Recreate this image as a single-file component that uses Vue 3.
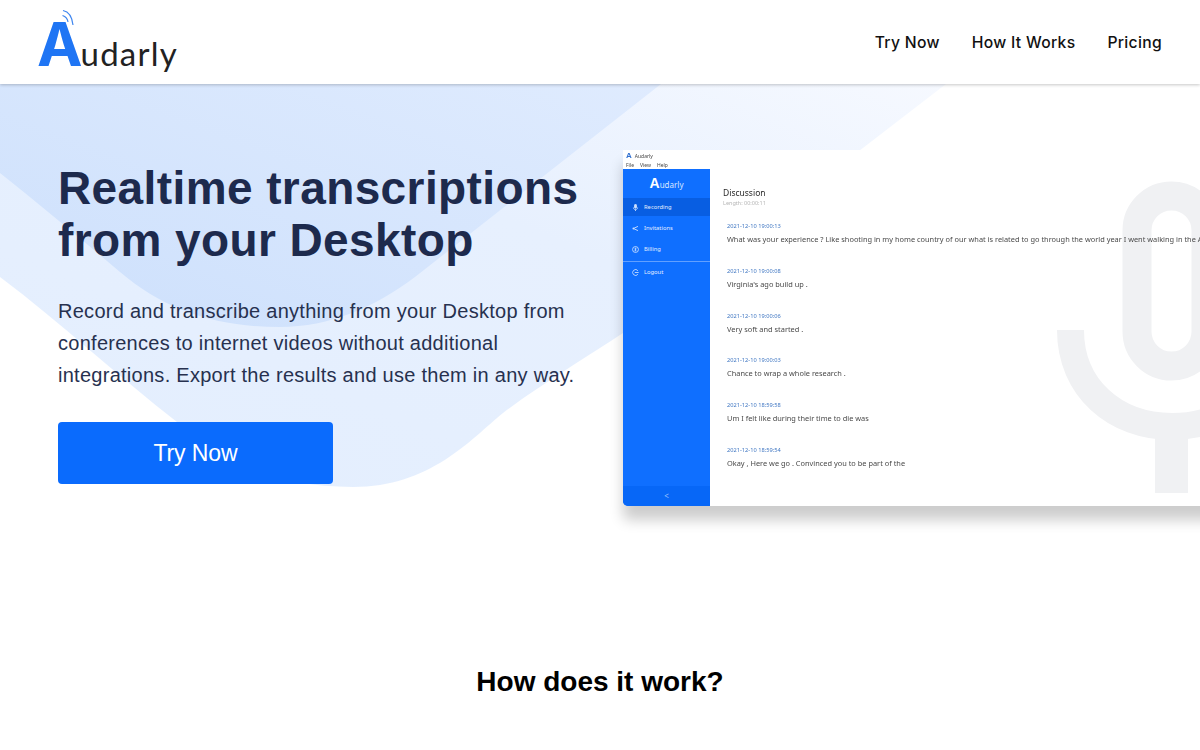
<script setup>
const navLinks = ["Try Now", "How It Works", "Pricing"];

const menu = [
  { label: "Recording", icon: "mic", active: true },
  { label: "Invitations", icon: "share" },
  { label: "Billing", icon: "coin" },
];

const lines = [
  { time: "2021-12-10 19:00:13", text: "What was your experience ? Like shooting in my home country of our what is related to go through the world year I went walking in the A" },
  { time: "2021-12-10 19:00:08", text: "Virginia's ago build up ." },
  { time: "2021-12-10 19:00:06", text: "Very soft and started ." },
  { time: "2021-12-10 19:00:03", text: "Chance to wrap a whole research ." },
  { time: "2021-12-10 18:59:58", text: "Um I felt like during their time to die was" },
  { time: "2021-12-10 18:59:54", text: "Okay , Here we go . Convinced you to be part of the" },
];
</script>

<template>
  <div class="page">
    <header class="header">
      <a class="logo">
        <svg class="logo-waves" viewBox="0 0 14 20" width="14" height="20" fill="none" stroke="#3f86ef">
          <path d="M1.5 6.5C4.5 7.5 6.5 9.5 7 13" stroke-width="1.2" />
          <path d="M2 1.5C7 2.5 11 6.5 12 16" stroke-width="1.2" />
        </svg>
        <span class="logo-a">A</span><span class="logo-rest">udarly</span>
      </a>
      <nav class="nav">
        <a v-for="link in navLinks" :key="link">{{ link }}</a>
      </nav>
    </header>

    <section class="hero">
      <svg class="hero-bg" viewBox="0 84 1200 430" width="1200" height="430">
        <defs>
          <linearGradient id="lightFill" x1="0" y1="1" x2="1" y2="0">
            <stop offset="0" stop-color="#e3eefe" />
            <stop offset="0.6" stop-color="#e7f0fe" />
            <stop offset="1" stop-color="#f6f9ff" />
          </linearGradient>
          <linearGradient id="darkFill" x1="0" y1="1" x2="1" y2="0">
            <stop offset="0" stop-color="#cde0fc" />
            <stop offset="1" stop-color="#dfebfe" />
          </linearGradient>
        </defs>
        <path fill="url(#lightFill)" d="M0 84H946L623 333C590 355 540 385 503 413C470 440 430 487 353 487C270 487 225 460 177 422C120 378 60 322 0 277Z" />
        <path fill="url(#darkFill)" d="M0 84H661L415 277C375 307 330 327 280 327C215 327 165 310 120 272C80 238 40 205 0 173Z" />
      </svg>

      <div class="intro">
        <h1>Realtime transcriptions<br />from your Desktop</h1>
        <p>Record and transcribe anything from your Desktop from conferences to internet videos without additional integrations. Export the results and use them in any way.</p>
        <button class="cta">Try Now</button>
      </div>

      <div class="window">
        <div class="titlebar">
          <div class="title-row"><span class="title-a">A</span>Audarly</div>
          <div class="menu-row"><span>File</span><span>View</span><span>Help</span></div>
        </div>
        <div class="app">
          <aside class="sidebar">
            <div class="side-logo"><span class="side-a">A</span>udarly</div>
            <div v-for="item in menu" :key="item.label" class="side-item" :class="{ active: item.active }">
              <svg viewBox="0 0 10 10" width="7" height="7" fill="none" stroke="#cfe2ff" stroke-width="1.2">
                <template v-if="item.icon === 'mic'">
                  <rect x="3.6" y="0.5" width="2.8" height="5.5" rx="1.4" fill="#cfe2ff" />
                  <path d="M2 5c0 4 6 4 6 0M5 8v2" />
                </template>
                <template v-else-if="item.icon === 'share'">
                  <path d="M8.5 2 2 5l6.5 3" stroke-width="1.3" />
                  <circle cx="2" cy="5" r="1.3" fill="#cfe2ff" stroke="none" />
                </template>
                <template v-else>
                  <circle cx="5" cy="5" r="4.2" />
                  <path d="M6.5 3.4H4.2v1.6h1.6v1.6H3.5M5 2.2v5.6" stroke-width="0.8" />
                </template>
              </svg>
              {{ item.label }}
            </div>
            <div class="side-rule"></div>
            <div class="side-item">
              <svg viewBox="0 0 10 10" width="7" height="7" fill="none" stroke="#cfe2ff" stroke-width="1.2">
                <path d="M8.5 2.5A4.2 4.2 0 1 0 8.5 7.5M4 5h5.5" />
              </svg>
              Logout
            </div>
            <div class="side-toggle">&lt;</div>
          </aside>

          <main class="content">
            <svg class="mic-mark" viewBox="0 0 230 323" width="230" height="323" fill="none" stroke="#f0f1f3">
              <rect x="80" y="16" width="69" height="170" rx="34.5" stroke-width="29" />
              <path d="M13.5 150C13.5 208 58 246.5 115 246.5C172 246.5 216 208 216 150" stroke-width="27" />
              <path d="M114.5 250V313" stroke-width="33" />
            </svg>
            <h2>Discussion</h2>
            <div class="length">Length: 00:00:11</div>
            <div class="lines">
              <div v-for="line in lines" :key="line.time" class="line">
                <div class="time">{{ line.time }}</div>
                <div class="text">{{ line.text }}</div>
              </div>
            </div>
          </main>
        </div>
      </div>
    </section>

    <section class="how">
      <h2>How does it work?</h2>
    </section>
  </div>
</template>

<style>
html,
body {
  overflow: hidden;
  background: #fff;
}
</style>

<style scoped>
.page {
  width: 1200px;
  height: 750px;
  overflow: hidden;
  font-family: "Liberation Sans", Arial, sans-serif;
}

.header {
  position: relative;
  z-index: 2;
  height: 84px;
  display: flex;
  align-items: center;
  justify-content: space-between;
  padding: 0 38px 0 37px;
  background: #fff;
  box-shadow: 0 1px 3px rgba(0, 0, 0, 0.22);
}

.logo {
  position: relative;
  display: flex;
  align-items: baseline;
  height: 84px;
  line-height: 84px;
}

.logo-a {
  font-family: Inter, sans-serif;
  font-size: 61px;
  font-weight: 700;
  color: #1f75f4;
  line-height: 88px;
  letter-spacing: -2px;
}

.logo-rest {
  font-family: Lato, sans-serif;
  font-size: 33px;
  font-weight: 400;
  color: #222;
  letter-spacing: 1.2px;
}

.logo-waves {
  position: absolute;
  left: 24px;
  top: 9px;
}

.nav {
  display: flex;
  gap: 32px;
}

.nav a {
  font-family: Inter, sans-serif;
  font-size: 15.7px;
  font-weight: 500;
  color: #111;
  letter-spacing: 0.3px;
}

.hero {
  position: relative;
  height: 421px;
  display: flex;
  padding-top: 1px;
}

.hero-bg {
  position: absolute;
  left: 0;
  top: 0;
}

.intro {
  position: relative;
  padding: 77px 0 0 58px;
  width: 565px;
  flex-shrink: 0;
}

h1 {
  margin: 0;
  font-size: 46px;
  line-height: 52px;
  font-weight: 700;
  letter-spacing: 0.4px;
  color: #1d2a4d;
  white-space: nowrap;
}

.intro p {
  margin: 29px 0 31px;
  width: 530px;
  font-size: 20px;
  line-height: 32px;
  letter-spacing: 0.27px;
  color: #27314f;
}

.cta {
  display: block;
  width: 275px;
  height: 62px;
  border: 0;
  border-radius: 4px;
  background: #0a6bfd;
  color: #fff;
  font-family: inherit;
  font-size: 23px;
  letter-spacing: -0.1px;
}

.window {
  position: absolute;
  left: 623px;
  top: 66px;
  width: 700px;
  height: 356px;
  background: #fff;
  border-bottom-left-radius: 5px;
  box-shadow: 0 14px 14px rgba(0, 0, 0, 0.2);
  display: flex;
  flex-direction: column;
  font-family: "Noto Sans", "Open Sans", sans-serif;
}

.titlebar {
  height: 19px;
  padding-left: 3px;
  font-size: 5px;
  color: #444;
  background: #fff;
  filter: blur(0.25px);
}

.title-row {
  height: 10px;
  line-height: 10px;
  padding-top: 1px;
}

.title-a {
  font-family: "Liberation Sans", sans-serif;
  font-weight: 700;
  font-size: 8px;
  color: #2f6fd0;
  margin-right: 3px;
}

.menu-row {
  display: flex;
  gap: 6px;
  height: 8px;
  line-height: 8px;
}

.app {
  flex: 1;
  display: flex;
  min-height: 0;
}

.sidebar {
  position: relative;
  width: 87px;
  flex-shrink: 0;
  background: #0f6fff;
  color: #e3eeff;
  font-size: 5.8px;
  border-bottom-left-radius: 5px;
  overflow: hidden;
}

.side-logo {
  height: 29px;
  line-height: 29px;
  text-align: center;
  font-size: 8px;
  color: #d8e8ff;
}

.side-a {
  font-family: "Liberation Sans", sans-serif;
  font-size: 14px;
  font-weight: 700;
  color: #fff;
}

.side-item {
  height: 18px;
  display: flex;
  align-items: center;
  gap: 5px;
  padding-left: 9px;
  margin-bottom: 3px;
}

.side-item.active {
  background: #085ee2;
}

.side-rule {
  height: 1px;
  background: #62a0ff;
  margin: 1px 0 1px;
}

.side-toggle {
  position: absolute;
  left: 0;
  right: 0;
  bottom: 0;
  height: 20px;
  line-height: 20px;
  text-align: center;
  background: #0767f7;
  color: #9cc4ff;
  font-size: 8px;
}

.content {
  position: relative;
  flex: 1;
  padding: 18px 0 0 13px;
  min-width: 0;
  overflow: hidden;
}

.mic-mark {
  position: absolute;
  left: 347px;
  top: 11px;
}

.content h2 {
  position: relative;
  margin: 0;
  font-size: 8.5px;
  font-weight: 400;
  line-height: 12px;
  color: #2b2b2b;
  filter: blur(0.25px);
}

.length {
  position: relative;
  font-size: 5.5px;
  line-height: 8px;
  color: #b5b5b5;
  filter: blur(0.25px);
}

.lines {
  position: relative;
  padding: 13px 0 0 4px;
  filter: blur(0.25px);
}

.line {
  height: 44.8px;
  white-space: nowrap;
}

.time {
  font-size: 5.7px;
  line-height: 12px;
  color: #3f76c2;
}

.text {
  font-size: 7.4px;
  line-height: 14px;
  color: #4a4a4a;
}

.how {
  padding-top: 158px;
  text-align: center;
}

.how h2 {
  margin: 0;
  font-size: 28px;
  line-height: 36px;
  font-weight: 700;
  color: #000;
}
</style>
